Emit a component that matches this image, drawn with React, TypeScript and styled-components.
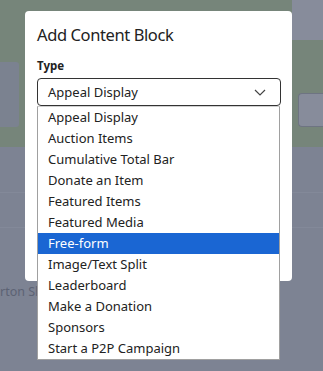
import React from "react";
import styled, { createGlobalStyle } from "styled-components";

const options = [
  "Appeal Display",
  "Auction Items",
  "Cumulative Total Bar",
  "Donate an Item",
  "Featured Items",
  "Featured Media",
  "Free-form",
  "Image/Text Split",
  "Leaderboard",
  "Make a Donation",
  "Sponsors",
  "Start a P2P Campaign",
];

const GlobalStyle = createGlobalStyle`
  html, body {
    margin: 0;
    padding: 0;
    width: 323px;
    height: 371px;
    overflow: hidden;
    font-family: "Source Sans Pro", "Noto Sans", "Liberation Sans", sans-serif;
  }
`;

function App() {
  const selected = "Free-form";

  return (
    <Root>
      <GlobalStyle />
      <Page>
        <Banner>
          <SideCard />
          <RightRail>
            <RailTop />
            <RailButton />
          </RightRail>
        </Banner>
        <Body>
          <Divider />
          <Divider />
          <PageText>rton Showcase</PageText>
        </Body>
      </Page>

      <Modal>
        <Title>Add Content Block</Title>
        <Label>Type</Label>
        <Select>
          <span>Appeal Display</span>
          <svg width="12" height="7" viewBox="0 0 12 7">
            <path
              d="M1 1l5 5 5-5"
              fill="none"
              stroke="#444"
              strokeWidth="1.2"
            />
          </svg>
        </Select>
        <Spacer />
      </Modal>

      <List>
        {options.map((o) => (
          <Option key={o} active={o === selected}>
            {o}
          </Option>
        ))}
      </List>
    </Root>
  );
}

const Root = styled.div`
  position: relative;
  width: 323px;
  height: 371px;
  overflow: hidden;
`;

const Page = styled.div`
  display: flex;
  flex-direction: column;
  height: 100%;
  background: #7d8393;
`;

const Banner = styled.div`
  height: 147px;
  background: #76857a;
  display: flex;
  justify-content: space-between;
`;

const SideCard = styled.div`
  margin-top: 62px;
  width: 19px;
  height: 65px;
  background: #7b8290;
  border-radius: 0 3px 3px 0;
`;

const RightRail = styled.div`
  width: 31px;
  display: flex;
  flex-direction: column;
  gap: 53px;
`;

const RailTop = styled.div`
  height: 40px;
  background: #878c9b;
`;

const RailButton = styled.div`
  margin-left: 6px;
  height: 32px;
  background: #878c9b;
  border: 1px solid #6e7482;
  border-right: none;
  border-radius: 4px 0 0 4px;
`;

const Body = styled.div`
  flex: 1;
  display: flex;
  flex-direction: column;
  padding-top: 45px;
`;

const Divider = styled.div`
  height: 1px;
  background: #838999;
  margin-bottom: 34px;
`;

const PageText = styled.div`
  margin-top: 22px;
  font-size: 12.5px;
  line-height: 16px;
  color: #5c6273;
  white-space: nowrap;
`;

const Modal = styled.div`
  position: absolute;
  left: 25px;
  top: 11px;
  width: 267px;
  height: 270px;
  box-sizing: border-box;
  background: #fff;
  border-radius: 4px;
  padding: 12px 11px 0 12px;
  display: flex;
  flex-direction: column;
`;

const Title = styled.div`
  font-size: 16.5px;
  letter-spacing: -0.4px;
  color: #222;
  line-height: 24px;
`;

const Label = styled.div`
  margin-top: 11px;
  font-size: 11.5px;
  font-weight: 700;
  color: #222;
  line-height: 16px;
`;

const Select = styled.div`
  margin-top: 4px;
  height: 28px;
  box-sizing: border-box;
  border: 1px solid #333;
  border-radius: 4px;
  display: flex;
  align-items: center;
  justify-content: space-between;
  padding: 0 14px 0 10px;
  font-size: 13px;
  color: #222;
`;

const Spacer = styled.div`
  flex: 1;
`;

const List = styled.div`
  position: absolute;
  left: 37px;
  top: 106px;
  width: 243px;
  box-sizing: border-box;
  background: #fff;
  border: 1px solid #a0a0a0;
  border-top: 1px solid #d0d0d0;
  display: flex;
  flex-direction: column;
`;

const Option = styled.div<{ active: boolean }>`
  height: 21px;
  line-height: 21px;
  padding-left: 10px;
  font-size: 13px;
  color: ${({ active }) => (active ? "#fff" : "#222")};
  background: ${({ active }) => (active ? "#1a66d3" : "transparent")};
`;

export default App;
